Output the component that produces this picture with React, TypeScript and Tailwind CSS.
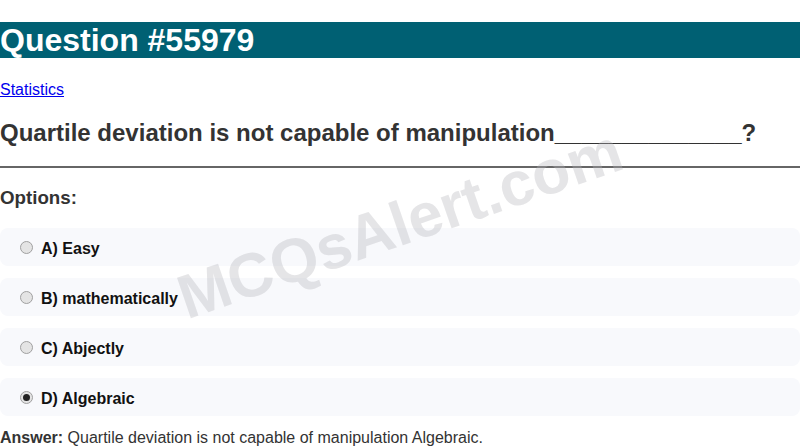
import React from "react";

const options = [
  { key: "A", text: "Easy" },
  { key: "B", text: "mathematically" },
  { key: "C", text: "Abjectly" },
  { key: "D", text: "Algebraic" },
];

function Radio({ checked }: { checked: boolean }) {
  return (
    <span className="flex h-[13px] w-[13px] shrink-0 items-center justify-center rounded-full border border-[#a0a0a0] bg-[#e4e4e4]">
      {checked && <span className="h-[7px] w-[7px] rounded-full bg-[#222]" />}
    </span>
  );
}

export default function App() {
  const answer = "D";

  return (
    <div
      className="relative w-[800px] h-[446px] overflow-hidden bg-white text-[#333]"
      style={{ fontFamily: '"Liberation Sans", Arial, sans-serif' }}
    >
      <h1 className="mt-[22px] mb-[23px] h-[36px] bg-[#006073] text-white text-[32px] font-bold leading-[36px]">
        Question #55979
      </h1>

      <a href="#" className="block text-[16px] leading-[18px] text-[#0000ee] underline">
        Statistics
      </a>

      <h2 className="mt-[20px] text-[24px] font-bold leading-[28px] text-[#333]">
        Quartile deviation is not capable of manipulation______________?
      </h2>

      <div className="mt-[19px] border-t-2 border-[#666]" />

      <h3 className="mt-[19px] text-[18.72px] font-bold leading-[21px] text-[#333]">Options:</h3>

      <div className="mt-[20px] flex flex-col gap-[12px]">
        {options.map((o) => (
          <div
            key={o.key}
            className="flex h-[38px] items-center rounded-[8px] bg-[#f8f9fc] pl-[20px]"
          >
            <Radio checked={o.key === answer} />
            <span className="ml-[8px] pt-[3px] text-[16px] font-bold leading-[18px] text-[#111]">
              {o.key}) {o.text}
            </span>
          </div>
        ))}
      </div>

      <p className="mt-[13px] text-[16px] leading-[18px] text-[#333]">
        <b>Answer:</b> Quartile deviation is not capable of manipulation Algebraic.
      </p>

      {/* watermark */}
      <div className="pointer-events-none absolute left-[400px] top-[224px] -translate-x-1/2 -translate-y-1/2 -rotate-[19deg] whitespace-nowrap text-[62px] font-bold leading-none text-[rgba(180,180,185,0.35)]">
        MCQsAlert.com
      </div>
    </div>
  );
}
